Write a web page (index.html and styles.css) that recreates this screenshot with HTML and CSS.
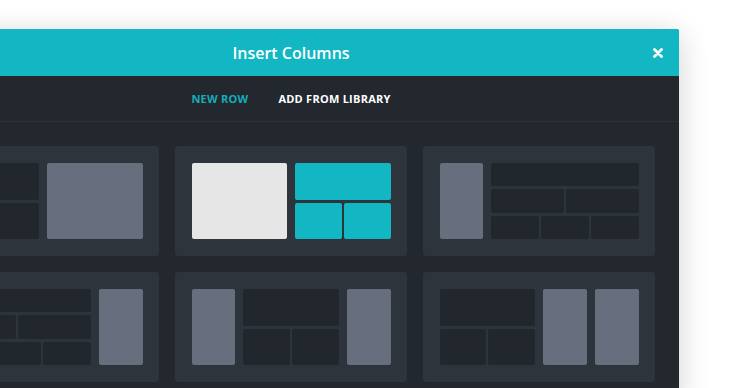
FILE: index.html
```html
<!DOCTYPE html>
<html lang="en">
<head>
<meta charset="utf-8">
<title>Insert Columns</title>
<link rel="stylesheet" href="styles.css">
</head>
<body>
<div class="modal">
  <header class="modal-header">
    <span class="spacer"></span>
    <h1 class="title">Insert Columns</h1>
    <button class="close" aria-label="Close">
      <svg viewBox="0 0 10 10" width="10" height="10"><path d="M1.5 1.5 L8.5 8.5 M8.5 1.5 L1.5 8.5" stroke="#fff" stroke-width="2.8" stroke-linecap="round"/></svg>
    </button>
  </header>
  <nav class="tabs">
    <a class="tab active">New Row</a>
    <a class="tab">Add From Library</a>
  </nav>
  <div class="layouts">
    <div class="card">
      <div class="preview">
        <div class="col span-2 stack">
          <div class="line"><div class="blk"></div></div>
          <div class="line"><div class="blk"></div><div class="blk"></div></div>
        </div>
        <div class="col span-2 blk gray"></div>
      </div>
    </div>
    <div class="card selected">
      <div class="preview">
        <div class="col span-2 blk white"></div>
        <div class="col span-2 stack">
          <div class="line"><div class="blk teal"></div></div>
          <div class="line"><div class="blk teal"></div><div class="blk teal"></div></div>
        </div>
      </div>
    </div>
    <div class="card">
      <div class="preview">
        <div class="col span-1 blk gray"></div>
        <div class="col span-3 stack">
          <div class="line"><div class="blk"></div></div>
          <div class="line"><div class="blk"></div><div class="blk"></div></div>
          <div class="line"><div class="blk"></div><div class="blk"></div><div class="blk"></div></div>
        </div>
      </div>
    </div>
    <div class="card">
      <div class="preview">
        <div class="col span-3 stack">
          <div class="line"><div class="blk"></div></div>
          <div class="line"><div class="blk"></div><div class="blk"></div></div>
          <div class="line"><div class="blk"></div><div class="blk"></div><div class="blk"></div></div>
        </div>
        <div class="col span-1 blk gray"></div>
      </div>
    </div>
    <div class="card">
      <div class="preview">
        <div class="col span-1 blk gray"></div>
        <div class="col span-2 stack">
          <div class="line"><div class="blk"></div></div>
          <div class="line"><div class="blk"></div><div class="blk"></div></div>
        </div>
        <div class="col span-1 blk gray"></div>
      </div>
    </div>
    <div class="card">
      <div class="preview">
        <div class="col span-2 stack">
          <div class="line"><div class="blk"></div></div>
          <div class="line"><div class="blk"></div><div class="blk"></div></div>
        </div>
        <div class="col span-1 blk gray"></div>
        <div class="col span-1 blk gray"></div>
      </div>
    </div>
  </div>
</div>
</body>
</html>
```
FILE: styles.css
```css
html, body {
  margin: 0;
  padding: 0;
  background: #ffffff;
  overflow: hidden;
  font-family: "Open Sans", "Noto Sans", sans-serif;
}

.modal {
  width: 776px;
  margin: 29px 0 0 -97px;
  background: #23282f;
  border-radius: 3px 3px 0 0;
  box-shadow: 0 5px 30px rgba(0, 0, 0, 0.18);
}

.modal-header {
  height: 47px;
  display: grid;
  grid-template-columns: 1fr auto 1fr;
  align-items: center;
  padding: 0 16px;
  background: #12b7c3;
  border-radius: 3px 3px 0 0;
}

.title {
  margin: 0;
  font-size: 16px;
  font-weight: 600;
  color: #ffffff;
  line-height: 1;
}

.close {
  justify-self: end;
  width: 10px;
  height: 10px;
  padding: 0;
  border: 0;
  background: none;
  display: flex;
}

.tabs {
  height: 45px;
  display: flex;
  justify-content: center;
  align-items: center;
  gap: 30px;
  border-bottom: 1px solid #2d3239;
}

.tab {
  font-size: 11px;
  font-weight: 700;
  letter-spacing: 0.25px;
  text-transform: uppercase;
  color: #ffffff;
}

.tab.active {
  color: #16adb9;
}

.layouts {
  display: grid;
  grid-template-columns: repeat(3, 232px);
  gap: 16px;
  padding: 24px;
}

.card {
  height: 110px;
  box-sizing: border-box;
  padding: 17px 16.5px;
  background: #2e343b;
  border-radius: 3px;
}

.preview {
  height: 76px;
  display: grid;
  grid-template-columns: repeat(4, 1fr);
  gap: 8px;
}

.span-1 { grid-column: span 1; }
.span-2 { grid-column: span 2; }
.span-3 { grid-column: span 3; }

.stack {
  display: flex;
  flex-direction: column;
  gap: 3px;
}

.line {
  flex: 1;
  display: flex;
  gap: 2px;
}

.line .blk {
  flex: 1;
}

.blk {
  background: #22272e;
  border-radius: 2px;
}

.blk.gray { background: #676f7e; }
.blk.white { background: #e6e6e6; }
.blk.teal { background: #12b7c3; }
```
